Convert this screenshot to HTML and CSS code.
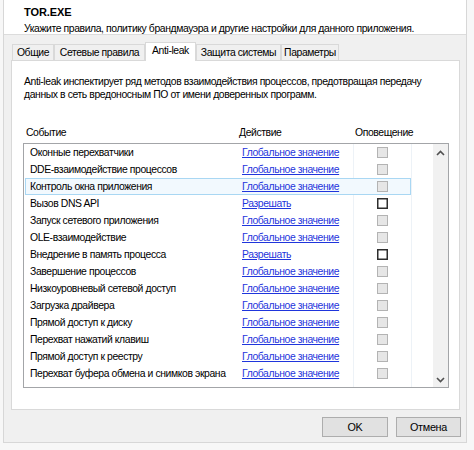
FILE: index.html
```html
<!DOCTYPE html>
<html lang="ru">
<head>
<meta charset="utf-8">
<link rel="stylesheet" href="styles.css">
</head>
<body>
<div class="win">
  <header class="hdr">
    <div class="title">TOR.EXE</div>
    <div class="sub">Укажите правила, политику брандмауэра и другие настройки для данного приложения.</div>
  </header>
  <div class="main">
    <div class="tabs">
      <div class="tab t1">Общие</div>
      <div class="tab t2">Сетевые правила</div>
      <div class="tab t3 sel">Anti-leak</div>
      <div class="tab t4">Защита системы</div>
      <div class="tab t5">Параметры</div>
    </div>
    <div class="panel">
      <p class="desc">Anti-leak инспектирует ряд методов взаимодействия процессов, предотвращая передачу<br>данных в сеть вредоносным ПО от имени доверенных программ.</p>
      <div class="colhead">
        <span>Событие</span>
        <span>Действие</span>
        <span>Оповещение</span>
      </div>
      <div class="list">
        <div class="rows">
          <div class="row"><div class="cells"><span>Оконные перехватчики</span><a href="#">Глобальное значение</a><i class="cb dis"></i></div></div>
          <div class="row"><div class="cells"><span>DDE-взаимодействие процессов</span><a href="#">Глобальное значение</a><i class="cb dis"></i></div></div>
          <div class="row"><div class="cells selrow"><span>Контроль окна приложения</span><a href="#">Глобальное значение</a><i class="cb dis"></i></div></div>
          <div class="row"><div class="cells"><span>Вызов DNS API</span><a href="#">Разрешать</a><i class="cb on"></i></div></div>
          <div class="row"><div class="cells"><span>Запуск сетевого приложения</span><a href="#">Глобальное значение</a><i class="cb dis"></i></div></div>
          <div class="row"><div class="cells"><span>OLE-взаимодействие</span><a href="#">Глобальное значение</a><i class="cb dis"></i></div></div>
          <div class="row"><div class="cells"><span>Внедрение в память процесса</span><a href="#">Разрешать</a><i class="cb on"></i></div></div>
          <div class="row"><div class="cells"><span>Завершение процессов</span><a href="#">Глобальное значение</a><i class="cb dis"></i></div></div>
          <div class="row"><div class="cells"><span>Низкоуровневый сетевой доступ</span><a href="#">Глобальное значение</a><i class="cb dis"></i></div></div>
          <div class="row"><div class="cells"><span>Загрузка драйвера</span><a href="#">Глобальное значение</a><i class="cb dis"></i></div></div>
          <div class="row"><div class="cells"><span>Прямой доступ к диску</span><a href="#">Глобальное значение</a><i class="cb dis"></i></div></div>
          <div class="row"><div class="cells"><span>Перехват нажатий клавиш</span><a href="#">Глобальное значение</a><i class="cb dis"></i></div></div>
          <div class="row"><div class="cells"><span>Прямой доступ к реестру</span><a href="#">Глобальное значение</a><i class="cb dis"></i></div></div>
          <div class="row"><div class="cells"><span>Перехват буфера обмена и снимков экрана</span><a href="#">Глобальное значение</a><i class="cb dis"></i></div></div>
        </div>
        <div class="scroll">
          <svg class="arr" width="9" height="6" viewBox="0 0 9 6"><polyline points="1,5 4.5,1.5 8,5" fill="none" stroke="#505050" stroke-width="1.6"/></svg>
          <svg class="arr" width="9" height="6" viewBox="0 0 9 6"><polyline points="1,1 4.5,4.5 8,1" fill="none" stroke="#505050" stroke-width="1.6"/></svg>
        </div>
      </div>
    </div>
    <div class="btns">
      <button class="btn ok">OK</button>
      <button class="btn cancel">Отмена</button>
    </div>
  </div>
</div>
</body>
</html>
```
FILE: styles.css
```css
* { box-sizing: border-box; }
html, body { margin: 0; padding: 0; }
body {
  background: #f7f7f7;
  font-family: "Liberation Sans", Arial, sans-serif;
  font-size: 10.4px;
  letter-spacing: -0.4px;
  color: #000;
  width: 474px;
  height: 450px;
  overflow: hidden;
}
.win {
  margin-left: 3px;
  width: 464px;
  height: 443px;
  background: #f0f0f0;
  border-left: 1px solid #d7d7d7;
  border-right: 1px solid #d7d7d7;
  border-bottom: 1px solid #d7d7d7;
  display: flex;
  flex-direction: column;
}
.hdr {
  background: #fff;
  height: 35px;
  border-bottom: 1px solid #dcdcdc;
  padding: 5px 0 0 20px;
}
.title { font-weight: bold; font-size: 11px; letter-spacing: -0.1px; line-height: 14px; }
.sub { line-height: 13px; margin-top: 3px; white-space: nowrap; }
.main {
  padding: 7px 0 0 7px;
}
.tabs {
  display: flex;
  align-items: flex-end;
  height: 19px;
  margin-bottom: -1px;
  padding-left: 1px;
  position: relative;
  z-index: 1;
}
.tab {
  height: 16px;
  margin-bottom: 1px;
  background: #f0f0f0;
  border: 1px solid #d9d9d9;
  border-bottom: none;
  text-align: center;
  line-height: 15px;
  white-space: nowrap;
}
.tab.sel {
  height: 19px;
  margin-bottom: 0;
  background: #fff;
  line-height: 16px;
}
.t1 { width: 42px; }
.t2 { width: 91px; }
.t3 { width: 51px; }
.t4 { width: 85px; }
.t5 { width: 58px; }
.panel {
  width: 449px;
  height: 350px;
  background: #fff;
  border: 1px solid #d9d9d9;
  padding: 14px 0 0 11px;
}
.desc {
  margin: 0 0 0 1px;
  line-height: 13px;
  white-space: nowrap;
}
.colhead {
  display: grid;
  grid-template-columns: 213px 116px auto;
  margin-top: 25px;
  line-height: 13px;
  padding-left: 3px;
}
.list {
  margin-top: 4px;
  width: 426px;
  height: 245px;
  border: 1px solid #a3a5a8;
  display: flex;
}
.rows {
  width: 409px;
  background-image:
    linear-gradient(#edf2f7, #edf2f7),
    linear-gradient(#edf2f7, #edf2f7);
  background-size: 1px 100%, 1px 100%;
  background-position: 329px 0, 387px 0;
  background-repeat: no-repeat;
}
.row { height: 17px; }
.cells {
  margin-left: 1px;
  width: 386px;
  height: 17px;
  display: grid;
  grid-template-columns: 211px 116px 57px;
  align-items: center;
  border: 1px solid transparent;
}
.cells.selrow {
  border-color: #a9d7f3;
  background: #f2f9fe;
}
.cells span { padding-left: 4px; white-space: nowrap; }
.cells a {
  padding-left: 5px;
  color: #1f35dc;
  text-decoration: underline;
  white-space: nowrap;
}
.cb {
  justify-self: center;
  width: 11px;
  height: 11px;
  display: block;
  margin-left: 1px;
}
.cb.dis {
  border: 1px solid #b3b3b3;
  background: #e6e6e6;
}
.cb.on {
  border: 1px solid #2e2e2e;
  background: #fff;
  box-shadow: inset 0 0 0 0.5px #2e2e2e;
}
.scroll {
  width: 15px;
  background: #f1f1f1;
  display: flex;
  flex-direction: column;
  justify-content: space-between;
  align-items: center;
  padding: 6px 0 4px;
}
.btns {
  width: 450px;
  display: flex;
  justify-content: flex-end;
  gap: 8px;
  margin-top: 7px;
}
.btn {
  font-family: inherit;
  font-size: 10.8px;
  letter-spacing: -0.3px;
  height: 20px;
  background: #e1e1e1;
  border: 1px solid #adadad;
  padding: 0;
  color: #000;
}
.ok { width: 66px; }
.cancel { width: 65px; }
```
